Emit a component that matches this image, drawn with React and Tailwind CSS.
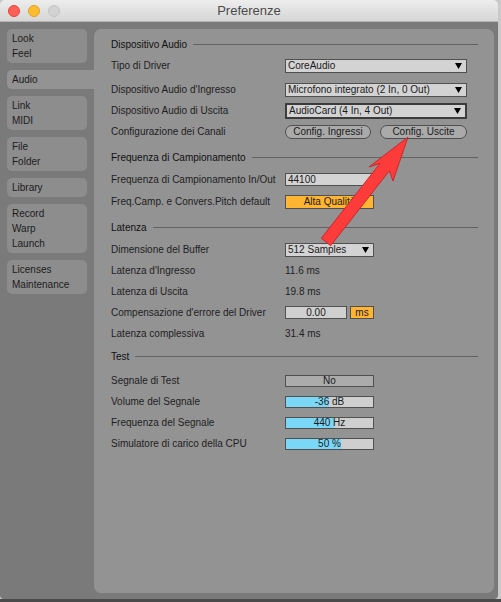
import React from "react";

const Tri = () => (
  <svg width="7" height="6" viewBox="0 0 7 6" className="absolute right-[4px] top-1/2 -translate-y-1/2">
    <polygon points="0,0 7,0 3.5,6" fill="#000" />
  </svg>
);

function Dropdown({ text, w, focus }) {
  return (
    <div
      className={
        "relative flex items-center bg-[#d3d3d3] pl-[2px] text-[#1a1a1a] " +
        w +
        (focus ? " h-[16px] border-2 border-[#3c3c3c]" : " h-[14px] border border-[#505050]")
      }
    >
      <span className="leading-none">{text}</span>
      <Tri />
    </div>
  );
}

function Header({ children, mt }) {
  return (
    <div className={"flex h-[14px] items-center " + mt}>
      <span className="text-[#111]">{children}</span>
      <div className="ml-[6px] h-px flex-1 bg-[#626262]" />
    </div>
  );
}

function Row({ label, children, mt = "" }) {
  return (
    <div className={"flex h-[21px] items-center " + mt}>
      <div className="w-[174px] shrink-0 text-[#1e1e1e]">{label}</div>
      <div className="flex items-center">{children}</div>
    </div>
  );
}

function Slider({ text, fill }) {
  return (
    <div className="relative h-[12px] w-[89px] overflow-hidden border border-[#505050] bg-[#cfcfcf]">
      <div className={"absolute inset-y-0 left-0 bg-[#7ad7f7] " + fill} />
      <div className="relative flex h-full items-center justify-center leading-none text-[#1a1a1a]">{text}</div>
    </div>
  );
}

function SideBox({ lines, selected }) {
  return (
    <div
      className={
        "flex flex-col py-[2px] pl-[5px] text-[#1c1c1c] " +
        (selected ? "w-[87px] rounded-l-[5px] bg-[#939393]" : "w-[80px] rounded-[5px] bg-[#8d8d8d]")
      }
    >
      {lines.map((l) => (
        <div key={l} className="h-[15px] leading-[15px]">
          {l}
        </div>
      ))}
    </div>
  );
}

export default function App() {
  return (
    <div className="relative h-[602px] w-[501px] overflow-hidden bg-[#c9c9c9] font-['Liberation_Sans',Arial,sans-serif] text-[10px]">
      <div className="absolute bottom-0 left-0 h-[3px] w-full bg-[#4a4a4a]" />
      <div className="relative flex h-[599px] w-[498px] flex-col overflow-hidden rounded-t-[5px] rounded-b-[4px]">
        {/* title bar */}
        <div className="relative flex h-[22px] shrink-0 items-center justify-center border-b border-[#b4b4b4] bg-gradient-to-b from-[#ededed] to-[#d6d6d6]">
          <div className="absolute left-[8px] top-[5px] flex gap-[8px]">
            <div className="h-[12px] w-[12px] rounded-full border border-[#e0443e] bg-[#fe5f57]" />
            <div className="h-[12px] w-[12px] rounded-full border border-[#dea123] bg-[#febc2e]" />
            <div className="h-[12px] w-[12px] rounded-full border border-[#c2c2c2] bg-[#d3d3d3]" />
          </div>
          <span className="text-[13px] text-[#4b4b4b]">Preferenze</span>
        </div>
        {/* body */}
        <div className="flex flex-1 bg-[#7a7a7a] pb-[6px] pl-[7px] pr-[4px] pt-[7px]">
          <div className="flex w-[87px] shrink-0 flex-col gap-[7px]">
            <SideBox lines={["Look", "Feel"]} />
            <SideBox lines={["Audio"]} selected />
            <SideBox lines={["Link", "MIDI"]} />
            <SideBox lines={["File", "Folder"]} />
            <SideBox lines={["Library"]} />
            <SideBox lines={["Record", "Warp", "Launch"]} />
            <SideBox lines={["Licenses", "Maintenance"]} />
          </div>
          <div className="flex-1 rounded-[7px] bg-[#939393] pl-[17px] pr-[16px] pt-[8px]">
            <Header>Dispositivo Audio</Header>
            <Row label="Tipo di Driver" mt="mt-[4px]">
              <Dropdown text="CoreAudio" w="w-[182px]" />
            </Row>
            <Row label="Dispositivo Audio d'Ingresso" mt="mt-[3px]">
              <Dropdown text="Microfono integrato (2 In, 0 Out)" w="w-[182px]" />
            </Row>
            <Row label="Dispositivo Audio di Uscita">
              <Dropdown text="AudioCard (4 In, 4 Out)" w="w-[182px]" focus />
            </Row>
            <Row label="Configurazione dei Canali">
              <div className="flex h-[14px] w-[86px] items-center justify-center rounded-full border border-[#505050] bg-[#aaaaaa] leading-none text-[#1a1a1a]">
                Config. Ingressi
              </div>
              <div className="ml-[9px] flex h-[14px] w-[87px] items-center justify-center rounded-full border border-[#505050] bg-[#aaaaaa] leading-none text-[#1a1a1a]">
                Config. Uscite
              </div>
            </Row>

            <Header mt="mt-[8px]">Frequenza di Campionamento</Header>
            <Row label="Frequenza di Campionamento In/Out" mt="mt-[5px]">
              <div className="flex h-[13px] w-[89px] items-center border border-[#505050] bg-[#d3d3d3] pl-[2px] leading-none text-[#1a1a1a]">
                44100
              </div>
            </Row>
            <Row label="Freq.Camp. e Convers.Pitch default" mt="mt-[1px]">
              <div className="flex h-[14px] w-[89px] items-center justify-center border border-[#505050] bg-[#ffb532] leading-none text-[#1a1a1a]">
                Alta Qualità
              </div>
            </Row>

            <Header mt="mt-[8px]">Latenza</Header>
            <Row label="Dimensione del Buffer" mt="mt-[5px]">
              <Dropdown text="512 Samples" w="w-[89px]" />
            </Row>
            <Row label="Latenza d'Ingresso">
              <span className="text-[#1e1e1e]">11.6 ms</span>
            </Row>
            <Row label="Latenza di Uscita">
              <span className="text-[#1e1e1e]">19.8 ms</span>
            </Row>
            <Row label="Compensazione d'errore del Driver">
              <div className="flex h-[13px] w-[62px] items-center justify-center border border-[#505050] bg-[#d0d0d0] leading-none text-[#1a1a1a]">
                0.00
              </div>
              <div className="ml-[3px] flex h-[13px] w-[24px] items-center justify-center border border-[#505050] bg-[#ffb532] leading-none text-[#1a1a1a]">
                ms
              </div>
            </Row>
            <Row label="Latenza complessiva">
              <span className="text-[#1e1e1e]">31.4 ms</span>
            </Row>

            <Header mt="mt-[5px]">Test</Header>
            <Row label="Segnale di Test" mt="mt-[7px]">
              <div className="flex h-[12px] w-[89px] items-center justify-center border border-[#505050] bg-[#ababab] leading-none text-[#1a1a1a]">
                No
              </div>
            </Row>
            <Row label="Volume del Segnale">
              <Slider text="-36 dB" fill="w-[43px]" />
            </Row>
            <Row label="Frequenza del Segnale">
              <Slider text="440 Hz" fill="w-[48px]" />
            </Row>
            <Row label="Simulatore di carico della CPU">
              <Slider text="50 %" fill="w-[55px]" />
            </Row>
          </div>
        </div>
      </div>
      {/* red annotation arrow */}
      <svg className="pointer-events-none absolute left-0 top-0" width="501" height="602" viewBox="0 0 501 602">
        <polygon
          points="408,137 393,181 389.4,170.8 330.7,245.7 321.3,238.3 380,163.4 369,167"
          fill="#fd3b3b"
          stroke="#c52a2a"
          strokeWidth="1"
          strokeLinejoin="round"
        />
      </svg>
    </div>
  );
}
